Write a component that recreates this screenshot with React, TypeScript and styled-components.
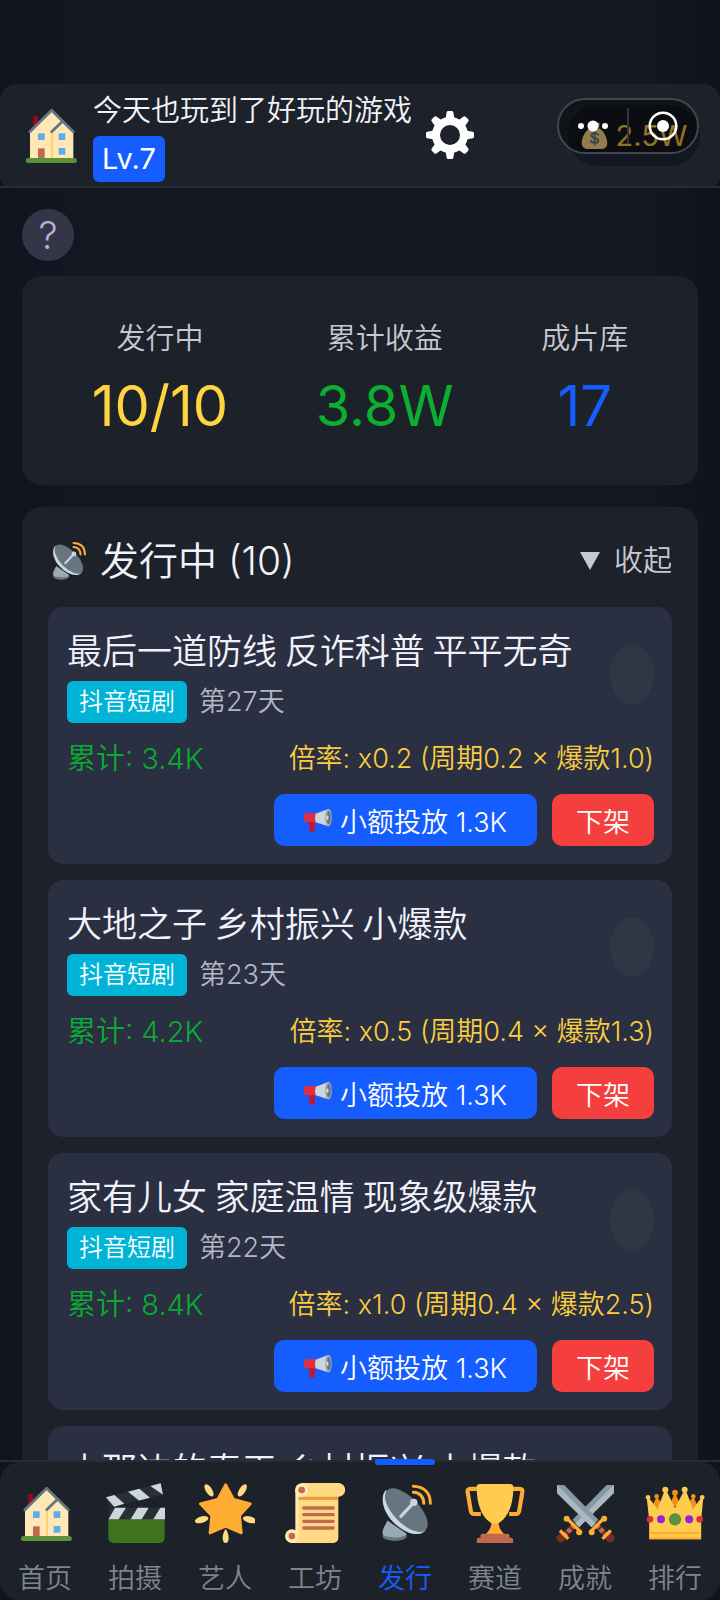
import React, { useState } from 'react';
import styled, { createGlobalStyle } from 'styled-components';

const GlobalStyle = createGlobalStyle`
  *, *::before, *::after { box-sizing: border-box; }
  html, body { margin: 0; height: 100%; background: #131720; }
  body {
    font-family: Inter, "Noto Sans CJK SC", sans-serif;
    font-weight: 350;
    color: #f2f3fa;
  }
  button, a { font: inherit; color: inherit; }
  button { border: 0; padding: 0; background: none; cursor: pointer; }
  svg { display: block; flex: none; }
`;

const Screen = styled.div`
  height: 100vh;
  display: flex;
  flex-direction: column;
  padding-top: 84px;
  background: linear-gradient(90deg, #10141e, #131722 10%, #131722 90%, #10131d);
`;

const Header = styled.header`
  position: relative;
  flex: none;
  display: flex;
  align-items: center;
  height: 102px;
  padding: 0 20px;
  border-radius: 16px 16px 8px 8px;
  background: #1d2129;
`;

const Rule = styled.div`
  flex: none;
  height: 2px;
  background: #282c35;
`;

const Profile = styled.div`
  display: flex;
  flex-direction: column;
  align-items: flex-start;
  gap: 2px;
  margin: 0 14px 0 13px;
`;

const PlayerName = styled.span`
  font-size: 29px;
  line-height: 46px;
  white-space: nowrap;
`;

const Level = styled.span`
  padding: 0 9px;
  border-radius: 6px;
  background: #165dff;
  font-size: 29px;
  font-weight: 400;
  line-height: 46px;
  color: #fff;
`;

const Money = styled.div`
  display: flex;
  align-items: center;
  justify-content: center;
  gap: 8px;
  width: 132px;
  height: 61px;
  margin-left: auto;
  border-radius: 31px;
  background: #131722;
  font-size: 29px;
  font-weight: 400;
  color: #fbc93a;
`;

const Capsule = styled.div`
  position: absolute;
  top: 14px;
  right: 21px;
  display: flex;
  align-items: center;
  width: 142px;
  height: 56px;
  border: 2px solid #43464d;
  border-radius: 28px;
  background: rgba(0, 0, 0, 0.42);
`;

const CapsuleButton = styled.button`
  flex: 1;
  display: flex;
  justify-content: center;
  align-items: center;
  height: 36px;
  & + & { border-left: 2px solid #33363c; }
`;

const Main = styled.main`
  flex: 1;
  min-height: 0;
  overflow: hidden;
  padding: 21px 22px 0;
`;

const HelpButton = styled.button`
  display: block;
  width: 52px;
  height: 52px;
  margin-bottom: 15px;
  border-radius: 50%;
  background: #343547;
  font-size: 38px;
  line-height: 52px;
  color: #b5b0d8;
`;

const Stats = styled.dl`
  display: flex;
  justify-content: space-around;
  margin: 0 0 22px;
  height: 209px;
  padding: 40px 26px 0;
  border-radius: 20px;
  background: #1d2129;
`;

const Stat = styled.div`
  text-align: center;
`;

const StatLabel = styled.dt`
  font-size: 29px;
  line-height: 46px;
  color: #c6c9d4;
`;

const StatValue = styled.dd<{ $color: string }>`
  margin: 4px 0 0;
  font-size: 56px;
  font-weight: 400;
  line-height: 80px;
  color: ${(p) => p.$color};
`;

const Panel = styled.section`
  padding: 24px 26px;
  border-radius: 20px;
  background: #1d2129;
`;

const PanelHead = styled.div`
  display: flex;
  align-items: center;
  gap: 12px;
  height: 60px;
  margin-bottom: 16px;
`;

const PanelTitle = styled.h2`
  margin: 0;
  font-size: 39px;
  font-weight: inherit;
  line-height: 60px;
`;

const Toggle = styled.button`
  display: flex;
  align-items: center;
  gap: 14px;
  margin-left: auto;
  font-size: 29px;
  line-height: 42px;
  color: #c6c9d4;
`;

const List = styled.ul`
  display: flex;
  flex-direction: column;
  gap: 16px;
  margin: 0;
  padding: 0;
  list-style: none;
`;

const Item = styled.li`
  padding: 18px 18px 18px 19px;
  border-radius: 15px;
  background: #2a2f42;
`;

const ItemTop = styled.div`
  display: flex;
  align-items: center;
  justify-content: space-between;
`;

const ItemTitle = styled.h3`
  margin: 0 0 8px;
  font-family: "Noto Sans CJK SC", sans-serif;
  font-size: 35px;
  font-weight: inherit;
  line-height: 48px;
`;

const Meta = styled.div`
  display: flex;
  align-items: center;
  gap: 12px;
  font-size: 27px;
  line-height: 42px;
  color: #b4b7c6;
`;

const Platform = styled.span`
  padding: 0 12px;
  border-radius: 6px;
  background: #00b4d8;
  font-size: 24px;
  color: #fff;
`;

const DetailButton = styled.button`
  flex: none;
  width: 44px;
  height: 60px;
  border-radius: 50%;
  background: #313645;
`;

const Figures = styled.div`
  display: flex;
  align-items: center;
  justify-content: space-between;
  margin: 14px 0;
  line-height: 43px;
`;

const Total = styled.span`
  font-size: 29px;
  color: #0aab34;
`;

const Rate = styled.span`
  font-size: 27px;
  color: #fbce3f;
`;

const Actions = styled.div`
  display: flex;
  justify-content: flex-end;
  gap: 15px;
`;

const Action = styled.button<{ $danger?: boolean }>`
  display: flex;
  align-items: center;
  gap: 8px;
  height: 52px;
  padding: 0 ${(p) => (p.$danger ? 24 : 30)}px;
  border-radius: 10px;
  background: ${(p) => (p.$danger ? '#f53f3f' : '#165dff')};
  font-size: 27px;
  color: #fff;
`;

const TabBar = styled.nav`
  flex: none;
  display: flex;
  height: 138px;
  border-radius: 20px;
  background: #1d2129;
`;

const Tab = styled.a<{ $active: boolean }>`
  position: relative;
  flex: 1;
  display: flex;
  flex-direction: column;
  align-items: center;
  gap: 16px;
  padding-top: 21px;
  font-size: 27px;
  line-height: 40px;
  text-decoration: none;
  color: ${(p) => (p.$active ? '#165dff' : '#7f858f')};

  &::before {
    content: "";
    display: ${(p) => (p.$active ? 'block' : 'none')};
    position: absolute;
    top: -3px;
    width: 60px;
    height: 6px;
    border-radius: 3px;
    background: #165dff;
  }
`;

type IconProps = { size: number };

const Svg = ({ size, children }: IconProps & { children: React.ReactNode }) => (
  <svg width={size} height={size} viewBox="0 0 36 36" aria-hidden="true">{children}</svg>
);

const House = ({ size }: IconProps) => (
  <Svg size={size}>
    <path fill="#A0041E" d="M8 6.6h2.8v6H8z" />
    <path fill="#FFE8B6" d="M6 16 19 3l13 13v16.500H6z" />
    <path fill="none" stroke="#66757F" strokeWidth="1.700" strokeLinecap="round" strokeLinejoin="round" d="M5.900 16 19 3.200 32 16M19 16l6.200-6" />
    <path stroke="#FFCC4D" strokeWidth=".9" d="M19.300 17v15" />
    <path fill="#5DADEC" d="M10.800 17h4v4h-4zM23.200 17h4v4h-4zM23.200 25.800h4v4h-4z" />
    <path fill="#C1694F" d="M10.800 26h4v6h-4z" />
    <rect x="3.500" y="31.800" width="30.600" height="3" rx="1.500" fill="#5C913B" />
  </Svg>
);

const Clapper = ({ size }: IconProps) => (
  <Svg size={size}>
    <path fill="#3E721D" d="M2 21h33.800v12a3 3 0 0 1-3 3H5a3 3 0 0 1-3-3z" />
    <path fill="#292F33" d="M2.200 14.800H36v7H2.200z" />
    <path fill="#CCD6DD" d="M6 14.800h6.600L8.200 21.800H2.200zM19.600 14.800h6.600l-4.200 7h-6.600zM33.200 14.800H36v7h-7z" />
    <path fill="#292F33" d="M.6 8.600 33.400.2 34.800 7 4.500 14.500 2.500 14z" />
    <path fill="#CCD6DD" d="M.6 8.600 5.600 7.200 11.600 12.500 5.500 14.200zM13.800 5.200 20.600 3.400 27 8.800 20.400 10.500zM27.200 1.800 33.400.2 34.800 7z" />
  </Svg>
);

const Star = ({ size }: IconProps) => (
  <Svg size={size}>
    <g fill="#FFD983">
      <ellipse cx="8.400" cy="4.400" rx="1.900" ry="4.200" transform="rotate(-32 8.400 4.400)" />
      <ellipse cx="28.400" cy="4.400" rx="1.900" ry="4.200" transform="rotate(32 28.400 4.400)" />
      <ellipse cx="4" cy="22" rx="1.900" ry="4.200" transform="rotate(74 4 22)" />
      <ellipse cx="32.800" cy="22" rx="1.900" ry="4.200" transform="rotate(-74 32.800 22)" />
      <path d="M18.400 27.500c1 1.500 1.800 3.500 1.800 5.500s-.7 3-1.800 3-1.800-1-1.800-3 .8-4 1.800-5.500z" />
    </g>
    <path fill="#FFAC33" stroke="#FFAC33" strokeWidth="1.600" strokeLinejoin="round" d="M18.400 1 23.200 9.800 33.200 12.500 26.800 19.600 27.800 30 18.400 26 9 30 10 19.600 3.200 12.500 13.600 9.800z" />
  </Svg>
);

const Scroll = ({ size }: IconProps) => (
  <Svg size={size}>
    <path fill="#FFE8B6" d="M10 0h4v36H4a4 4 0 1 1 2.200-7.500V4z" />
    <path fill="#FFD983" d="M10 0h22a4.100 4.100 0 0 1 0 8.200V33a3 3 0 0 1-3 3H4c4 0 4-3 4-5V8h2a4 4 0 0 0 0-8z" />
    <path fill="#E39F3D" d="M8.200 8.200h23.500v2H8.200z" />
    <circle cx="10" cy="4.200" r="4" fill="#FFE8B6" /><circle cx="10" cy="4.200" r="2" fill="#C1694F" />
    <circle cx="4.100" cy="31.800" r="4" fill="#FFE8B6" /><circle cx="4.100" cy="31.800" r="2" fill="#C1694F" />
    <path stroke="#C1694F" strokeWidth="2" strokeLinecap="round" d="M11.300 15h17.600M11.300 19h17.600M11.300 23h17.600M11.300 27h17.600" />
  </Svg>
);

const Dish = ({ size }: IconProps) => (
  <Svg size={size}>
    <ellipse cx="11.800" cy="31.800" rx="7.300" ry="3" fill="#66757F" />
    <path fill="#99AAB5" d="M7.500 22.500 19 30.500c-.5 3-14.500 3-14.500-.3 0-3 1.500-4.500 3-7.700z" />
    <path fill="#CCD6DD" d="M6.500 4.200C3 8 4.200 16.500 11 23.500s15.500 9.300 19.300 5z" />
    <ellipse cx="18.800" cy="16.300" rx="16.600" ry="7.800" transform="rotate(46 18.800 16.300)" fill="#66757F" />
    <path stroke="#CCD6DD" strokeWidth="1.900" strokeLinecap="round" d="m15.500 20 8-8.500" />
    <circle cx="23.300" cy="11.600" r="2.200" fill="#CCD6DD" />
    <path fill="none" stroke="#FFAC33" strokeWidth="1.800" strokeLinecap="round" d="M23 5.500c4 .2 6.100 2.800 6.300 6.700M23 1.900c6.500.2 10.200 4 10.200 10.300" />
  </Svg>
);

const Trophy = ({ size }: IconProps) => (
  <Svg size={size}>
    <path fill="none" stroke="#FFAC33" strokeWidth="2.500" d="M8 3.500H3.200Q1.300 3.500 1.600 5.500L3.500 16.800Q3.800 18.600 5.500 18.600H9.500M28 3.500h4.800q1.900 0 1.600 2L32.500 16.800q-.3 1.800-2 1.800H26.500" />
    <path fill="#FFAC33" d="M16 22h4c0 4 1 6.500 4 9H12c3-2.500 4-5 4-9z" />
    <path fill="#FFCC4D" d="M9 .6h18q2 0 2 1.800C29 13 26 20 21 23.500c-1 1-5 1-6 0C10 20 7 13 7 2.400Q7 .6 9 .6z" />
    <path fill="#C1694F" d="M10.300 30.500h15.400q1 0 1 1v1.300h1q1.200 0 1.200 1.200v2H7.100v-2q0-1.200 1.200-1.200h1v-1.300q0-1 1-1z" />
  </Svg>
);

const Sword = () => (
  <>
    <path fill="#8899A6" d="M1.200 1.200h4.300L26 22l-4 4.500L1.200 6z" />
    <path fill="#AAB8C2" d="M1.200 1.200 24.300 24.300 22 26.500 1.200 6z" />
    <path stroke="#C1694F" strokeWidth="3" d="m25.500 26 5.500 5.500" />
    <path stroke="#662113" strokeWidth="1" d="m25.500 28.500 2.600-2.600M28 31l2.600-2.600" />
    <circle cx="33" cy="33" r="2.600" fill="#782F1E" />
    <path stroke="#FFAC33" strokeWidth="2" d="m21.500 29 7.500-7.500M28.500 33.500l5-5" />
    <circle cx="22" cy="29.500" r="1.800" fill="#FFAC33" /><circle cx="29.500" cy="21.500" r="1.800" fill="#FFAC33" />
  </>
);

const Swords = ({ size }: IconProps) => (
  <Svg size={size}>
    <g transform="matrix(-1 0 0 1 36.500 0)"><Sword /></g>
    <Sword />
  </Svg>
);

const Crown = ({ size }: IconProps) => (
  <Svg size={size}>
    <g fill="#F4900C">
      <path d="m4 15 3-7 5 7zM14.500 14 18 5.500l3.500 8.500zM24 15l5-7 3 7z" />
      <circle cx="7" cy="8" r="1.400" /><circle cx="18" cy="5.800" r="1.700" /><circle cx="29" cy="8" r="1.400" />
    </g>
    <path fill="#FFCC4D" d="M2.500 33.800V22L1 8.500h1l5.500 7 4.300-11h1L18 15l5.500-10.500h1l4.300 11 5.200-7h1L33.700 22v11.800z" />
    <g fill="#FFCC4D"><circle cx="1.800" cy="8.600" r="1.400" /><circle cx="12.200" cy="4" r="1.800" /><circle cx="23.800" cy="4" r="1.800" /><circle cx="34.300" cy="8.600" r="1.400" /></g>
    <path stroke="#FFAC33" strokeWidth="1.200" d="M2.500 30h31.200M2.500 33.200h31.200" />
    <circle cx="18" cy="21.800" r="3.700" fill="#5C913B" />
    <g fill="#9321E0"><circle cx="9.600" cy="21.800" r="2.400" /><circle cx="26.500" cy="21.800" r="2.400" /></g>
    <g fill="#DD2E44"><circle cx="3" cy="21.800" r="2" /><circle cx="32.800" cy="21.800" r="2" /></g>
  </Svg>
);

const MoneyBag = ({ size }: IconProps) => (
  <Svg size={size}>
    <path fill="#FDD888" d="M12 1c2 2 3-1 6 0s4-1 6 0 1 4-1 7c6 2 12 12 12 20 0 6-4 8-8 8H9c-5 0-8-3-8-8C1 20 7 10 13 8c-3-3-3-6-1-7z" />
    <path fill="#BF6952" d="M12 7.500h12v2H12z" />
    <path fill="none" stroke="#67757F" strokeWidth="2.600" strokeLinecap="round" d="M23 17c-2-3-9-3-9 1 0 5 9 2 9 7 0 4-8 4-10 0M18.300 12v18" />
  </Svg>
);

const Megaphone = ({ size }: IconProps) => (
  <Svg size={size}>
    <path fill="#BE1931" d="M6 18h8v13q0 2-2 2H9q-2 0-2-2z" />
    <path fill="#DD2E44" d="M2 9h14v12H4q-4 0-4-3v-6q0-2 2-3z" />
    <path fill="#CCD6DD" d="M15 10 31 4v22l-16-5q-2-5 0-11z" />
    <ellipse cx="31.500" cy="15" rx="4.200" ry="11.500" fill="#99AAB5" />
    <ellipse cx="31.800" cy="15" rx="2.600" ry="8.500" fill="#66757F" />
    <ellipse cx="30" cy="15" rx="1.600" ry="3" fill="#CCD6DD" />
  </Svg>
);

const Gear = ({ size }: IconProps) => (
  <Svg size={size}>
    <g fill="#fff">
      {[0, 45, 90, 135, 180, 225, 270, 315].map((a) => (
        <path key={a} transform={`rotate(${a} 18 18)`} d="M14.500 7 15.500 1q.2-1 1.200-1h2.600q1 0 1.200 1l1 6z" />
      ))}
    </g>
    <circle cx="18" cy="18" r="10.500" fill="none" stroke="#fff" strokeWidth="6" />
  </Svg>
);

const works = [
  { title: '最后一道防线 反诈科普 平平无奇', day: 27, total: '3.4K', rate: 'x0.2 (周期0.2 × 爆款1.0)' },
  { title: '大地之子 乡村振兴 小爆款', day: 23, total: '4.2K', rate: 'x0.5 (周期0.4 × 爆款1.3)' },
  { title: '家有儿女 家庭温情 现象级爆款', day: 22, total: '8.4K', rate: 'x1.0 (周期0.4 × 爆款2.5)' },
  { title: '山那边的春天 乡村振兴 小爆款', day: 21, total: '4.0K', rate: 'x0.5 (周期0.4 × 爆款1.3)' },
];

const tabs = [
  { label: '首页', Icon: House },
  { label: '拍摄', Icon: Clapper },
  { label: '艺人', Icon: Star },
  { label: '工坊', Icon: Scroll },
  { label: '发行', Icon: Dish },
  { label: '赛道', Icon: Trophy },
  { label: '成就', Icon: Swords },
  { label: '排行', Icon: Crown },
];

export default function App() {
  const [open, setOpen] = useState(true);
  return (
    <Screen>
      <GlobalStyle />
      <Header>
        <House size={60} />
        <Profile>
          <PlayerName>今天也玩到了好玩的游戏</PlayerName>
          <Level>Lv.7</Level>
        </Profile>
        <button aria-label="设置"><Gear size={48} /></button>
        <Money><MoneyBag size={27} />2.5W</Money>
        <Capsule>
          <CapsuleButton aria-label="更多">
            <svg width="32" height="12" viewBox="0 0 32 12" fill="#fff">
              <circle cx="4" cy="6" r="3" /><circle cx="16" cy="6" r="5.500" /><circle cx="28" cy="6" r="3" />
            </svg>
          </CapsuleButton>
          <CapsuleButton aria-label="关闭">
            <svg width="30" height="30" viewBox="0 0 30 30">
              <circle cx="15" cy="15" r="13.300" fill="none" stroke="#fff" strokeWidth="2.600" />
              <circle cx="15" cy="15" r="6" fill="#fff" />
            </svg>
          </CapsuleButton>
        </Capsule>
      </Header>
      <Rule />
      <Main>
        <HelpButton aria-label="帮助">?</HelpButton>
        <Stats>
          <Stat><StatLabel>发行中</StatLabel><StatValue $color="#ffd43f">10/10</StatValue></Stat>
          <Stat><StatLabel>累计收益</StatLabel><StatValue $color="#0bb033">3.8W</StatValue></Stat>
          <Stat><StatLabel>成片库</StatLabel><StatValue $color="#165dff">17</StatValue></Stat>
        </Stats>
        <Panel>
          <PanelHead>
            <Dish size={40} />
            <PanelTitle>发行中 (10)</PanelTitle>
            <Toggle aria-expanded={open} onClick={() => setOpen(!open)}>
              <svg width="20" height="18" viewBox="0 0 20 18" fill="currentColor"><path d="M0 0h20L10 18z" /></svg>
              收起
            </Toggle>
          </PanelHead>
          {open && (
            <List>
              {works.map((w) => (
                <Item key={w.title}>
                  <ItemTop>
                    <div>
                      <ItemTitle>{w.title}</ItemTitle>
                      <Meta><Platform>抖音短剧</Platform>第{w.day}天</Meta>
                    </div>
                    <DetailButton aria-label="详情" />
                  </ItemTop>
                  <Figures>
                    <Total>累计: {w.total}</Total>
                    <Rate>倍率: {w.rate}</Rate>
                  </Figures>
                  <Actions>
                    <Action><Megaphone size={28} />小额投放 1.3K</Action>
                    <Action $danger>下架</Action>
                  </Actions>
                </Item>
              ))}
            </List>
          )}
        </Panel>
      </Main>
      <Rule />
      <TabBar>
        {tabs.map(({ label, Icon }) => (
          <Tab key={label} href={`#${label}`} $active={label === '发行'} aria-current={label === '发行' ? 'page' : undefined}>
            <Icon size={60} />
            {label}
          </Tab>
        ))}
      </TabBar>
    </Screen>
  );
}
